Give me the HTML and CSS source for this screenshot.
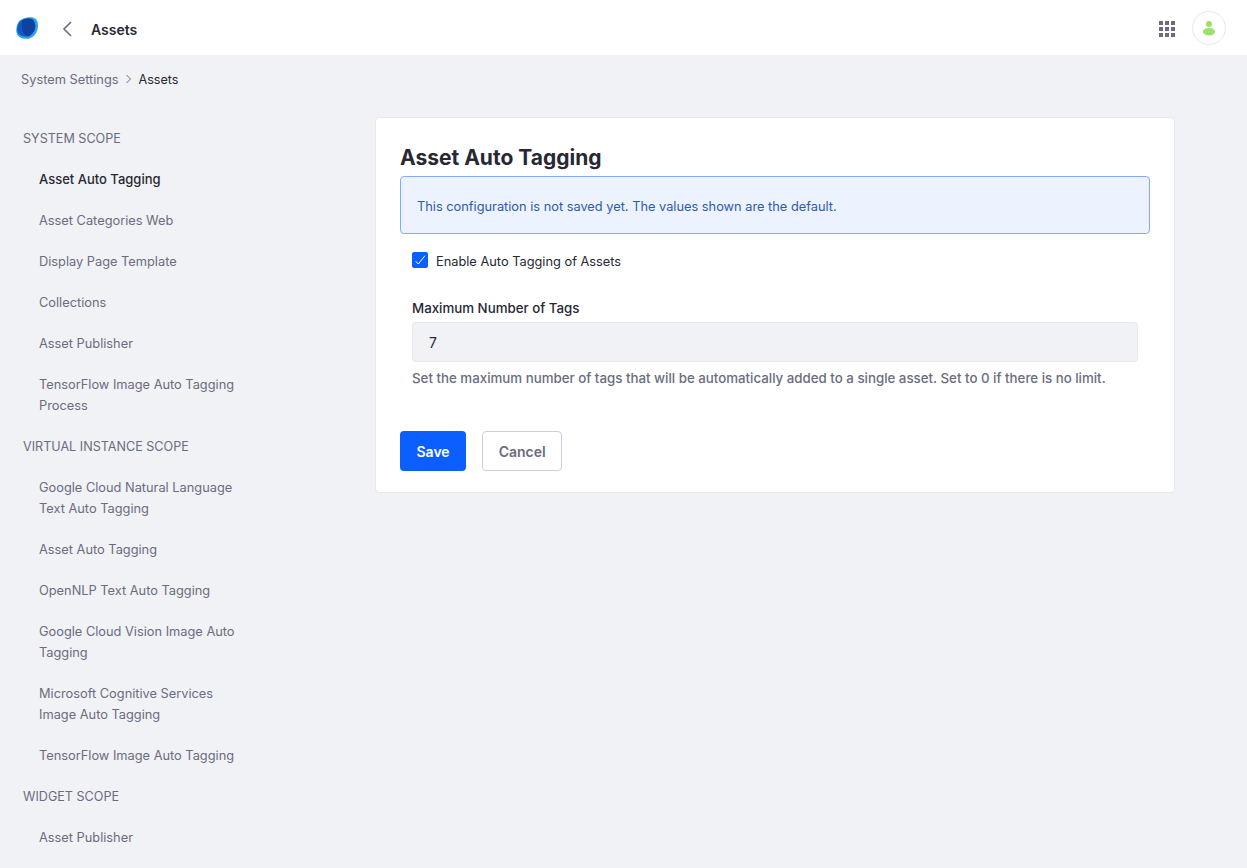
FILE: index.html
```html
<!DOCTYPE html>
<html lang="en">
<head>
    <meta charset="UTF-8">
    <title>Assets</title>
    <link rel="stylesheet" href="styles.css">
</head>
<body>
    <header class="topbar">
        <svg class="logo" width="24" height="24" viewBox="0 0 24 24">
            <path d="M5 4.5C9 1.5 16.5 0.2 20 2.5C23.5 5 23.6 10.5 22 15C20.2 19.8 16.4 22.8 11.5 22.8C7 22.8 2.8 21.5 1.6 17C0.6 13 2 7 5 4.5Z" fill="#2aa5ee"/>
            <path d="M5.5 5C8.5 2.6 14 1.6 17 3.2C20.4 5.2 20.8 10 19.6 13.8C18.2 17.6 15 20.6 11 20.6C7.4 20.6 3.4 19.4 2.4 15.6C1.6 12 3 7 5.5 5Z" fill="#1259c6"/>
            <path d="M7.5 4.2C10.6 2.6 14.5 2 17 3.2C20.4 5.2 20.8 10 19.6 13.8C18.4 17 15.6 20 12.2 20.5C9.4 18.6 7.4 15.6 6.8 12C6.4 9.2 6.6 6.4 7.5 4.2Z" fill="#0f429f"/>
        </svg>
        <svg class="back" width="12" height="18" viewBox="0 0 12 18">
            <path d="M10 2L3 9L10 16" fill="none" stroke="#6b6c7e" stroke-width="1.6"/>
        </svg>
        <span class="topbar-title">Assets</span>
        <div class="topbar-right">
            <div class="apps">
                <i></i><i></i><i></i><i></i><i></i><i></i><i></i><i></i><i></i>
            </div>
            <div class="avatar">
                <svg width="14" height="16" viewBox="0 0 14 16">
                    <circle cx="7" cy="4" r="3" fill="#9be169"/>
                    <ellipse cx="7" cy="11.8" rx="6" ry="3.8" fill="#9be169"/>
                </svg>
            </div>
        </div>
    </header>

    <nav class="breadcrumb">
        <span class="crumb">System Settings</span>
        <svg width="7" height="10" viewBox="0 0 7 10">
            <path d="M1.5 1L5.5 5L1.5 9" fill="none" stroke="#6b6c7e" stroke-width="1"/>
        </svg>
        <span class="crumb-active">Assets</span>
    </nav>

    <div class="layout">
        <aside class="sidebar">
            <h4>SYSTEM SCOPE</h4>
            <ul>
                <li class="active">Asset Auto Tagging</li>
                <li>Asset Categories Web</li>
                <li>Display Page Template</li>
                <li>Collections</li>
                <li>Asset Publisher</li>
                <li>TensorFlow Image Auto Tagging Process</li>
            </ul>
            <h4>VIRTUAL INSTANCE SCOPE</h4>
            <ul>
                <li>Google Cloud Natural Language Text Auto Tagging</li>
                <li>Asset Auto Tagging</li>
                <li>OpenNLP Text Auto Tagging</li>
                <li>Google Cloud Vision Image Auto Tagging</li>
                <li>Microsoft Cognitive Services Image Auto Tagging</li>
                <li>TensorFlow Image Auto Tagging</li>
            </ul>
            <h4>WIDGET SCOPE</h4>
            <ul>
                <li>Asset Publisher</li>
            </ul>
        </aside>

        <main class="card">
            <h2>Asset Auto Tagging</h2>
            <div class="alert">This configuration is not saved yet. The values shown are the default.</div>
            <div class="fields">
                <div class="check-row">
                    <span class="checkbox">
                        <svg width="12" height="12" viewBox="0 0 12 12">
                            <path d="M1.7 7.2L4.3 10L11 1.7" fill="none" stroke="#fff" stroke-width="1"/>
                        </svg>
                    </span>
                    <span>Enable Auto Tagging of Assets</span>
                </div>
                <label class="field-label">Maximum Number of Tags</label>
                <div class="input">7</div>
                <p class="help">Set the maximum number of tags that will be automatically added to a single asset. Set to 0 if there is no limit.</p>
            </div>
            <div class="actions">
                <button class="btn btn-primary">Save</button>
                <button class="btn btn-secondary">Cancel</button>
            </div>
        </main>
    </div>
</body>
</html>
```

FILE: styles.css
```css
* {
    box-sizing: border-box;
}
html, body {
    height: 100%;
}
body {
    margin: 0;
    background: #f1f2f5;
    font-family: Inter, "Liberation Sans", sans-serif;
    font-size: 12.8px;
    line-height: 21px;
    color: #272833;
    overflow: hidden;
}
.topbar {
    height: 55px;
    background: #fff;
    display: flex;
    align-items: center;
    padding: 0 21px 0 15px;
}
.back {
    margin: 3px 0 0 22px;
}
.topbar-title {
    margin: 3px 0 0 18px;
    font-size: 14px;
    font-weight: 600;
}
.topbar-right {
    margin-left: auto;
    display: flex;
    align-items: center;
    gap: 17px;
}
.apps {
    display: grid;
    grid-template-columns: repeat(3, 4px);
    gap: 2px;
    margin-top: 2px;
}
.apps i {
    width: 4px;
    height: 4px;
    background: #6b6c7e;
}
.avatar {
    width: 34px;
    height: 34px;
    border: 1px solid #e7e7ed;
    border-radius: 50%;
    display: flex;
    align-items: center;
    justify-content: center;
}
.breadcrumb {
    height: 48px;
    padding-left: 21px;
    display: flex;
    align-items: center;
    gap: 6.5px;
}
.crumb {
    color: #6b6c7e;
}
.crumb-active {
    font-size: 12.6px;
}
.layout {
    display: flex;
    align-items: flex-start;
}
.sidebar {
    width: 375px;
    padding: 15px 0 0 23px;
}
.sidebar h4 {
    margin: 0;
    padding: 10px 0;
    font-size: 12.6px;
    font-weight: 400;
    color: #6b6c7e;
}
.sidebar ul {
    list-style: none;
    margin: 0;
    padding: 0 0 0 16px;
    width: 220px;
}
.sidebar li {
    padding: 10px 0;
    color: #6b6c7e;
}
.sidebar li.active {
    color: #272833;
    font-size: 13px;
    font-weight: 500;
}
.card {
    width: 800px;
    margin-top: 14px;
    height: 376px;
    padding: 25px 24px 24px;
    background: #fff;
    border: 1px solid #e7e7ed;
    border-radius: 4px;
}
.card h2 {
    margin: 1px 0 -1px;
    font-size: 21px;
    line-height: 28px;
    font-weight: 700;
    color: #272833;
}
.alert {
    margin-top: 5px;
    height: 58px;
    padding: 2px 16px 0;
    display: flex;
    align-items: center;
    background: #edf3fe;
    border: 1px solid #80acff;
    border-radius: 4px;
    color: #2e5aac;
}
.fields {
    padding: 17px 12px 0;
}
.check-row {
    display: flex;
    align-items: center;
    gap: 8px;
    height: 21px;
}
.checkbox {
    width: 16px;
    height: 16px;
    margin-top: -3px;
    background: #0b5fff;
    border-radius: 2px;
    display: flex;
    align-items: center;
    justify-content: center;
}
.field-label {
    display: block;
    margin-top: 26px;
    font-size: 13.3px;
    font-weight: 500;
}
.input {
    margin-top: 3px;
    height: 40px;
    padding: 0 16px;
    display: flex;
    align-items: center;
    background: #f1f2f5;
    border: 1px solid #e7e7ed;
    border-radius: 4px;
    font-size: 14px;
}
.help {
    margin: 6px 0 0;
    font-size: 13.3px;
    font-weight: 500;
    color: #6b6c7e;
}
.actions {
    margin-top: 42px;
    display: flex;
    gap: 16px;
}
.btn {
    height: 40px;
    padding: 0 15.5px;
    font-family: inherit;
    font-size: 14px;
    font-weight: 600;
    border-radius: 4px;
    border: 1px solid transparent;
}
.btn-primary {
    background: #0b5fff;
    color: #fff;
}
.btn-secondary {
    background: #fff;
    border-color: #cdced9;
    color: #6b6c7e;
}
```
